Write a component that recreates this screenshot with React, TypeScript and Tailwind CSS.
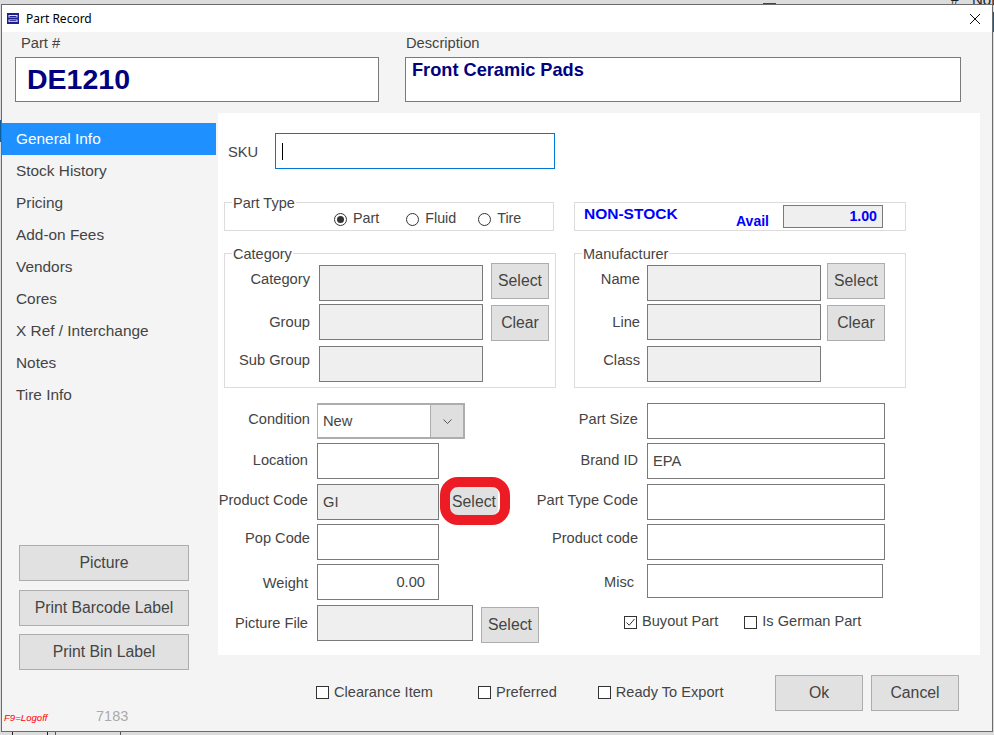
import React from "react";

const btn = "flex items-center justify-center bg-[#e1e1e1] border border-[#adadad] text-[15.8px] text-[#444]";
const box = "border border-[#7a7a7a] bg-white text-[14.7px] text-[#444] flex items-center px-[5px] h-[36px]";
const filled = "border border-[#7a7a7a] bg-[#efefef] text-[14.7px] text-[#444] flex items-center px-[5px] h-[36px]";

function Check({ on = false }: { on?: boolean }) {
  return (
    <span className="w-[13px] h-[13px] border border-[#333] bg-white flex items-center justify-center shrink-0">
      {on && (
        <svg width="11" height="11" viewBox="0 0 11 11" fill="none" stroke="#333" strokeWidth="1">
          <path d="M1.5 5.5 L4.2 8.2 L9.5 2" />
        </svg>
      )}
    </span>
  );
}

function Radio({ on = false, label, cls }: { on?: boolean; label: string; cls: string }) {
  return (
    <span className={`flex items-center gap-[6px] text-[14.3px] text-[#444] ${cls}`}>
      <span className="w-[13px] h-[13px] rounded-full border border-[#333] bg-white flex items-center justify-center">
        {on && <span className="w-[7px] h-[7px] rounded-full bg-[#333]" />}
      </span>
      {label}
    </span>
  );
}

function Group({ title, cls, children }: { title: string; cls: string; children?: React.ReactNode }) {
  return (
    <div className={`relative border border-[#dcdcdc] ${cls}`}>
      <span className="absolute left-[7px] top-[-9px] bg-white px-[1px] text-[14.5px] leading-[18px] text-[#444]">{title}</span>
      {children}
    </div>
  );
}

function GroupFields({ labels, inputW, labelW, buttons, btnGap }: { labels: string[]; inputW: string; labelW: string; buttons: string[]; btnGap: string }) {
  const tops = ["mt-0", "mt-[3px]", "mt-[6px]"];
  const shifts = ["pb-[8px]", "", "pb-[8px]"];
  return (
    <div className="flex">
      <div className="flex flex-col pt-[11px]">
        {labels.map((l, i) => (
          <div key={l} className={`flex items-center h-[36px] ${tops[i]}`}>
            <div className={`${labelW} flex justify-end h-full items-center text-[14.7px] text-[#444] whitespace-nowrap ${shifts[i]}`}>{l}</div>
            <div className={`${filled} ${inputW}`} />
          </div>
        ))}
      </div>
      <div className={`flex flex-col pt-[9px] gap-[6px] ${btnGap}`}>
        {buttons.map((b) => (
          <div key={b} className={`${btn} w-[58px] h-[36px]`}>{b}</div>
        ))}
      </div>
    </div>
  );
}

function Row({ label, cls = "", labelCls = "", labelW, children }: { label: string; cls?: string; labelCls?: string; labelW: string; children: React.ReactNode }) {
  return (
    <div className={`flex h-[36px] items-stretch ${cls}`}>
      <div className={`${labelW} flex items-center justify-end whitespace-nowrap text-[14.6px] text-[#444] ${labelCls}`}>{label}</div>
      {children}
    </div>
  );
}

const CheckLabel = ({ on, label, cls = "" }: { on?: boolean; label: string; cls?: string }) => (
  <span className={`flex items-center gap-[5px] text-[14.6px] text-[#444] ${cls}`}>
    <Check on={on} />
    {label}
  </span>
);

export default function App() {
  const side = ["Stock History", "Pricing", "Add-on Fees", "Vendors", "Cores", "X Ref / Interchange", "Notes", "Tire Info"];
  return (
    <div className="relative w-[994px] h-[735px] overflow-hidden bg-[#dcdcdc] pt-[4px] pl-[1px] font-['Liberation_Sans',Arial,sans-serif]">
      {/* what shows of the window behind */}
      <span className="absolute left-0 top-[120px] w-[1px] h-[22px] bg-[#0f5f9f]" />
      <span className="absolute right-0 top-[12px] w-[1px] h-[20px] bg-[#0f5f9f]" />
      <span className="absolute left-[763px] top-[3px] w-[13px] h-[2px] bg-[#444]" />
      <span className="absolute left-[951px] top-[-9px] text-[14px] leading-[16px] text-[#222]">#</span>
      <span className="absolute left-[972px] top-[-8px] text-[15px] leading-[16px] text-[#222]">Not</span>
      <span className="absolute left-[12px] top-[732px] w-[36px] h-[3px] border-x border-[#222]" />
      <span className="absolute left-[55px] top-[732px] w-[66px] h-[3px] border-x border-[#555]" />
      <div className="relative w-[992px] h-[728px] border border-[#6b6b6b] bg-[#f4f4f4] flex flex-col">
        {/* title bar */}
        <div className="h-[27px] bg-white flex items-center pl-[5px] pr-[12px] shrink-0">
          <svg width="12" height="11" viewBox="0 0 12 11" className="shrink-0">
            <rect width="12" height="11" fill="#1f1f8f" />
            <rect x="1.5" y="2" width="9" height="2.5" fill="#dfe3f5" />
            <rect x="1.5" y="6.5" width="9" height="2.5" fill="#dfe3f5" />
            <rect x="2.5" y="3" width="7" height="1" fill="#1f1f8f" />
            <rect x="2.5" y="7.2" width="7" height="1" fill="#1f1f8f" />
          </svg>
          <span className="ml-[7px] text-[12px] text-black font-['Noto_Sans',sans-serif]">Part Record</span>
          <svg width="10" height="10" viewBox="0 0 10 10" className="ml-auto" stroke="#111" strokeWidth="1" fill="none">
            <path d="M0 0 L10 10 M10 0 L0 10" />
          </svg>
        </div>
        {/* header */}
        <div className="h-[81px] shrink-0 flex pl-[13px]">
          <div className="w-[364px]">
            <div className="h-[25px] pl-[6px] pt-[1px] text-[14.7px] leading-[20px] text-[#444]">Part #</div>
            <div className="h-[45px] border border-[#7a7a7a] bg-white flex items-center pl-[11px] pb-[1px] text-[28.5px] font-bold text-[#000080]">DE1210</div>
          </div>
          <div className="w-[556px] ml-[26px]">
            <div className="h-[25px] pl-[1px] pt-[1px] text-[14.7px] leading-[20px] text-[#444]">Description</div>
            <div className="h-[45px] border border-[#7a7a7a] bg-white pl-[6px] pt-[1px] text-[18.2px] leading-[22px] font-bold text-[#000080]">Front Ceramic Pads</div>
          </div>
        </div>
        <div className="flex flex-1">
          {/* left column */}
          <div className="w-[216px] shrink-0 flex flex-col pt-[10px] pr-[2px]">
            <div className="h-[32px] bg-[#1e90ff] text-white text-[15.4px] flex items-center pl-[14px]">General Info</div>
            {side.map((s) => (
              <div key={s} className="h-[32px] text-[#444] text-[15.4px] flex items-center pl-[14px]">{s}</div>
            ))}
            <div className="mt-[134px] ml-[17px] w-[170px] flex flex-col">
              <div className={`${btn} h-[36px]`}>Picture</div>
              <div className={`${btn} h-[36px] mt-[9px]`}>Print Barcode Label</div>
              <div className={`${btn} h-[36px] mt-[8px]`}>Print Bin Label</div>
            </div>
            <div className="mt-auto mb-[3px] flex items-center pl-[2px]">
              <span className="w-[92px] text-[9.6px] italic text-[#ff0000] pt-[2px]">F9=Logoff</span>
              <span className="text-[14.5px] text-[#aaa]">7183</span>
            </div>
          </div>
          {/* right column */}
          <div className="flex-1 flex flex-col">
            <div className="h-[542px] w-[762px] bg-white pt-[20px]">
              <div className="flex items-center h-[36px] pl-[10px]">
                <span className="w-[47px] text-[14.7px] text-[#444] pt-[2px]">SKU</span>
                <div className="w-[280px] h-[36px] border border-[#0078d7] flex items-center pl-[6px]">
                  <span className="w-[1px] h-[17px] bg-black" />
                </div>
              </div>
              <div className="flex mt-[33px] ml-[6px]">
                <Group title="Part Type" cls="w-[330px] h-[29px]">
                  <div className="flex h-full items-center pt-[5px]">
                    <Radio on label="Part" cls="ml-[109px]" />
                    <Radio label="Fluid" cls="ml-[27px]" />
                    <Radio label="Tire" cls="ml-[22px]" />
                  </div>
                </Group>
                <div className="w-[332px] h-[29px] ml-[20px] border border-[#dcdcdc] flex text-[#0000ff] font-bold">
                  <span className="ml-[9px] mt-[2px] w-[152px] text-[15.5px] leading-[18px]">NON-STOCK</span>
                  <span className="mt-[9px] w-[47px] text-[14px] leading-[18px]">Avail</span>
                  <span className="mt-[2px] w-[100px] h-[23px] border border-[#7a7a7a] bg-[#efefef] text-[14.2px] flex items-center justify-end pr-[5px]">1.00</span>
                </div>
              </div>
              <div className="flex mt-[22px] ml-[6px]">
                <Group title="Category" cls="w-[332px] h-[135px]">
                  <GroupFields labels={["Category", "Group", "Sub Group"]} labelW="w-[85px] mr-[9px]" inputW="w-[164px]" btnGap="ml-[8px]" buttons={["Select", "Clear"]} />
                </Group>
                <Group title="Manufacturer" cls="w-[332px] h-[135px] ml-[18px]">
                  <GroupFields labels={["Name", "Line", "Class"]} labelW="w-[65px] mr-[7px]" inputW="w-[174px]" btnGap="ml-[6px]" buttons={["Select", "Clear"]} />
                </Group>
              </div>
              <div className="flex mt-[15px]">
                <div className="w-[321px] shrink-0 flex flex-col">
                  <Row label="Condition" labelW="w-[92px] mr-[7px]" labelCls="pb-[2px]">
                    <div className="w-[148px] h-[36px] border border-[#adadad] border-r-2 border-t-2 border-b-2 bg-white flex">
                      <span className="flex-1 flex items-center pl-[5px] text-[14.7px] text-[#444]">New</span>
                      <span className="w-[33px] bg-[#dfdfdf] border-l border-[#adadad] flex items-center justify-center">
                        <svg width="9" height="5" viewBox="0 0 9 5" fill="none" stroke="#555" strokeWidth="1"><path d="M0.5 0.5 L4.5 4.5 L8.5 0.5" /></svg>
                      </span>
                    </div>
                  </Row>
                  <Row label="Location" labelW="w-[90px] mr-[9px]" cls="mt-[4px]">
                    <div className={`${box} w-[122px]`} />
                  </Row>
                  <Row label="Product Code" labelW="w-[90px] mr-[9px]" labelCls="pb-[2px]" cls="mt-[5px] relative">
                    <div className={`${filled} w-[122px] pt-[1px]`}>GI</div>
                    <div className={`${btn} ml-[11px] mt-[3px] w-[48px] h-[28px] rounded-[6px] !border-[#e1e1e1] pt-[2px]`}>Select</div>
                    <span className="absolute left-[222px] top-[-7px] w-[70px] h-[48px] rounded-[18px] border-[10px] border-[#ed1c24]" />
                  </Row>
                  <Row label="Pop Code" labelW="w-[92px] mr-[7px]" labelCls="pb-[6px]" cls="mt-[4px]">
                    <div className={`${box} w-[122px]`} />
                  </Row>
                  <Row label="Weight" labelW="w-[90px] mr-[9px]" labelCls="pt-[4px]" cls="mt-[4px]">
                    <div className={`${box} w-[122px] justify-end pr-[13px]`}>0.00</div>
                  </Row>
                  <Row label="Picture File" labelW="w-[90px] mr-[9px]" labelCls="pt-[2px]" cls="mt-[5px]">
                    <div className={`${filled} w-[156px]`} />
                    <div className={`${btn} ml-[8px] mt-[2px] w-[58px] h-[36px]`}>Select</div>
                  </Row>
                </div>
                <div className="flex flex-col">
                  <Row label="Part Size" labelW="w-[99px] mr-[9px]" labelCls="pb-[2px]">
                    <div className={`${box} w-[238px]`} />
                  </Row>
                  <Row label="Brand ID" labelW="w-[99px] mr-[9px]" cls="mt-[4px]">
                    <div className={`${box} w-[238px]`}>EPA</div>
                  </Row>
                  <Row label="Part Type Code" labelW="w-[99px] mr-[9px]" labelCls="pb-[2px]" cls="mt-[5px]">
                    <div className={`${box} w-[238px]`} />
                  </Row>
                  <Row label="Product code" labelW="w-[99px] mr-[9px]" labelCls="pb-[6px]" cls="mt-[4px]">
                    <div className={`${box} w-[238px]`} />
                  </Row>
                  <Row label="Misc" labelW="w-[95px] mr-[13px]" labelCls="pt-[2px]" cls="mt-[4px]">
                    <div className={`${box} w-[236px] !h-[34px]`} />
                  </Row>
                  <div className="flex mt-[15px] ml-[85px] h-[14px] items-center">
                    <CheckLabel on label="Buyout Part" />
                    <CheckLabel label="Is German Part" cls="ml-[26px]" />
                  </div>
                </div>
              </div>
            </div>
            {/* bottom bar */}
            <div className="flex-1 flex pt-[20px]">
              <div className="flex h-[36px] items-center ml-[98px] w-[459px]">
                <CheckLabel label="Clearance Item" />
                <CheckLabel label="Preferred" cls="ml-[45px]" />
                <CheckLabel label="Ready To Export" cls="ml-[41px]" />
              </div>
              <div className={`${btn} w-[88px] h-[36px]`}>Ok</div>
              <div className={`${btn} w-[88px] h-[36px] ml-[8px]`}>Cancel</div>
            </div>
          </div>
        </div>
      </div>
    </div>
  );
}
